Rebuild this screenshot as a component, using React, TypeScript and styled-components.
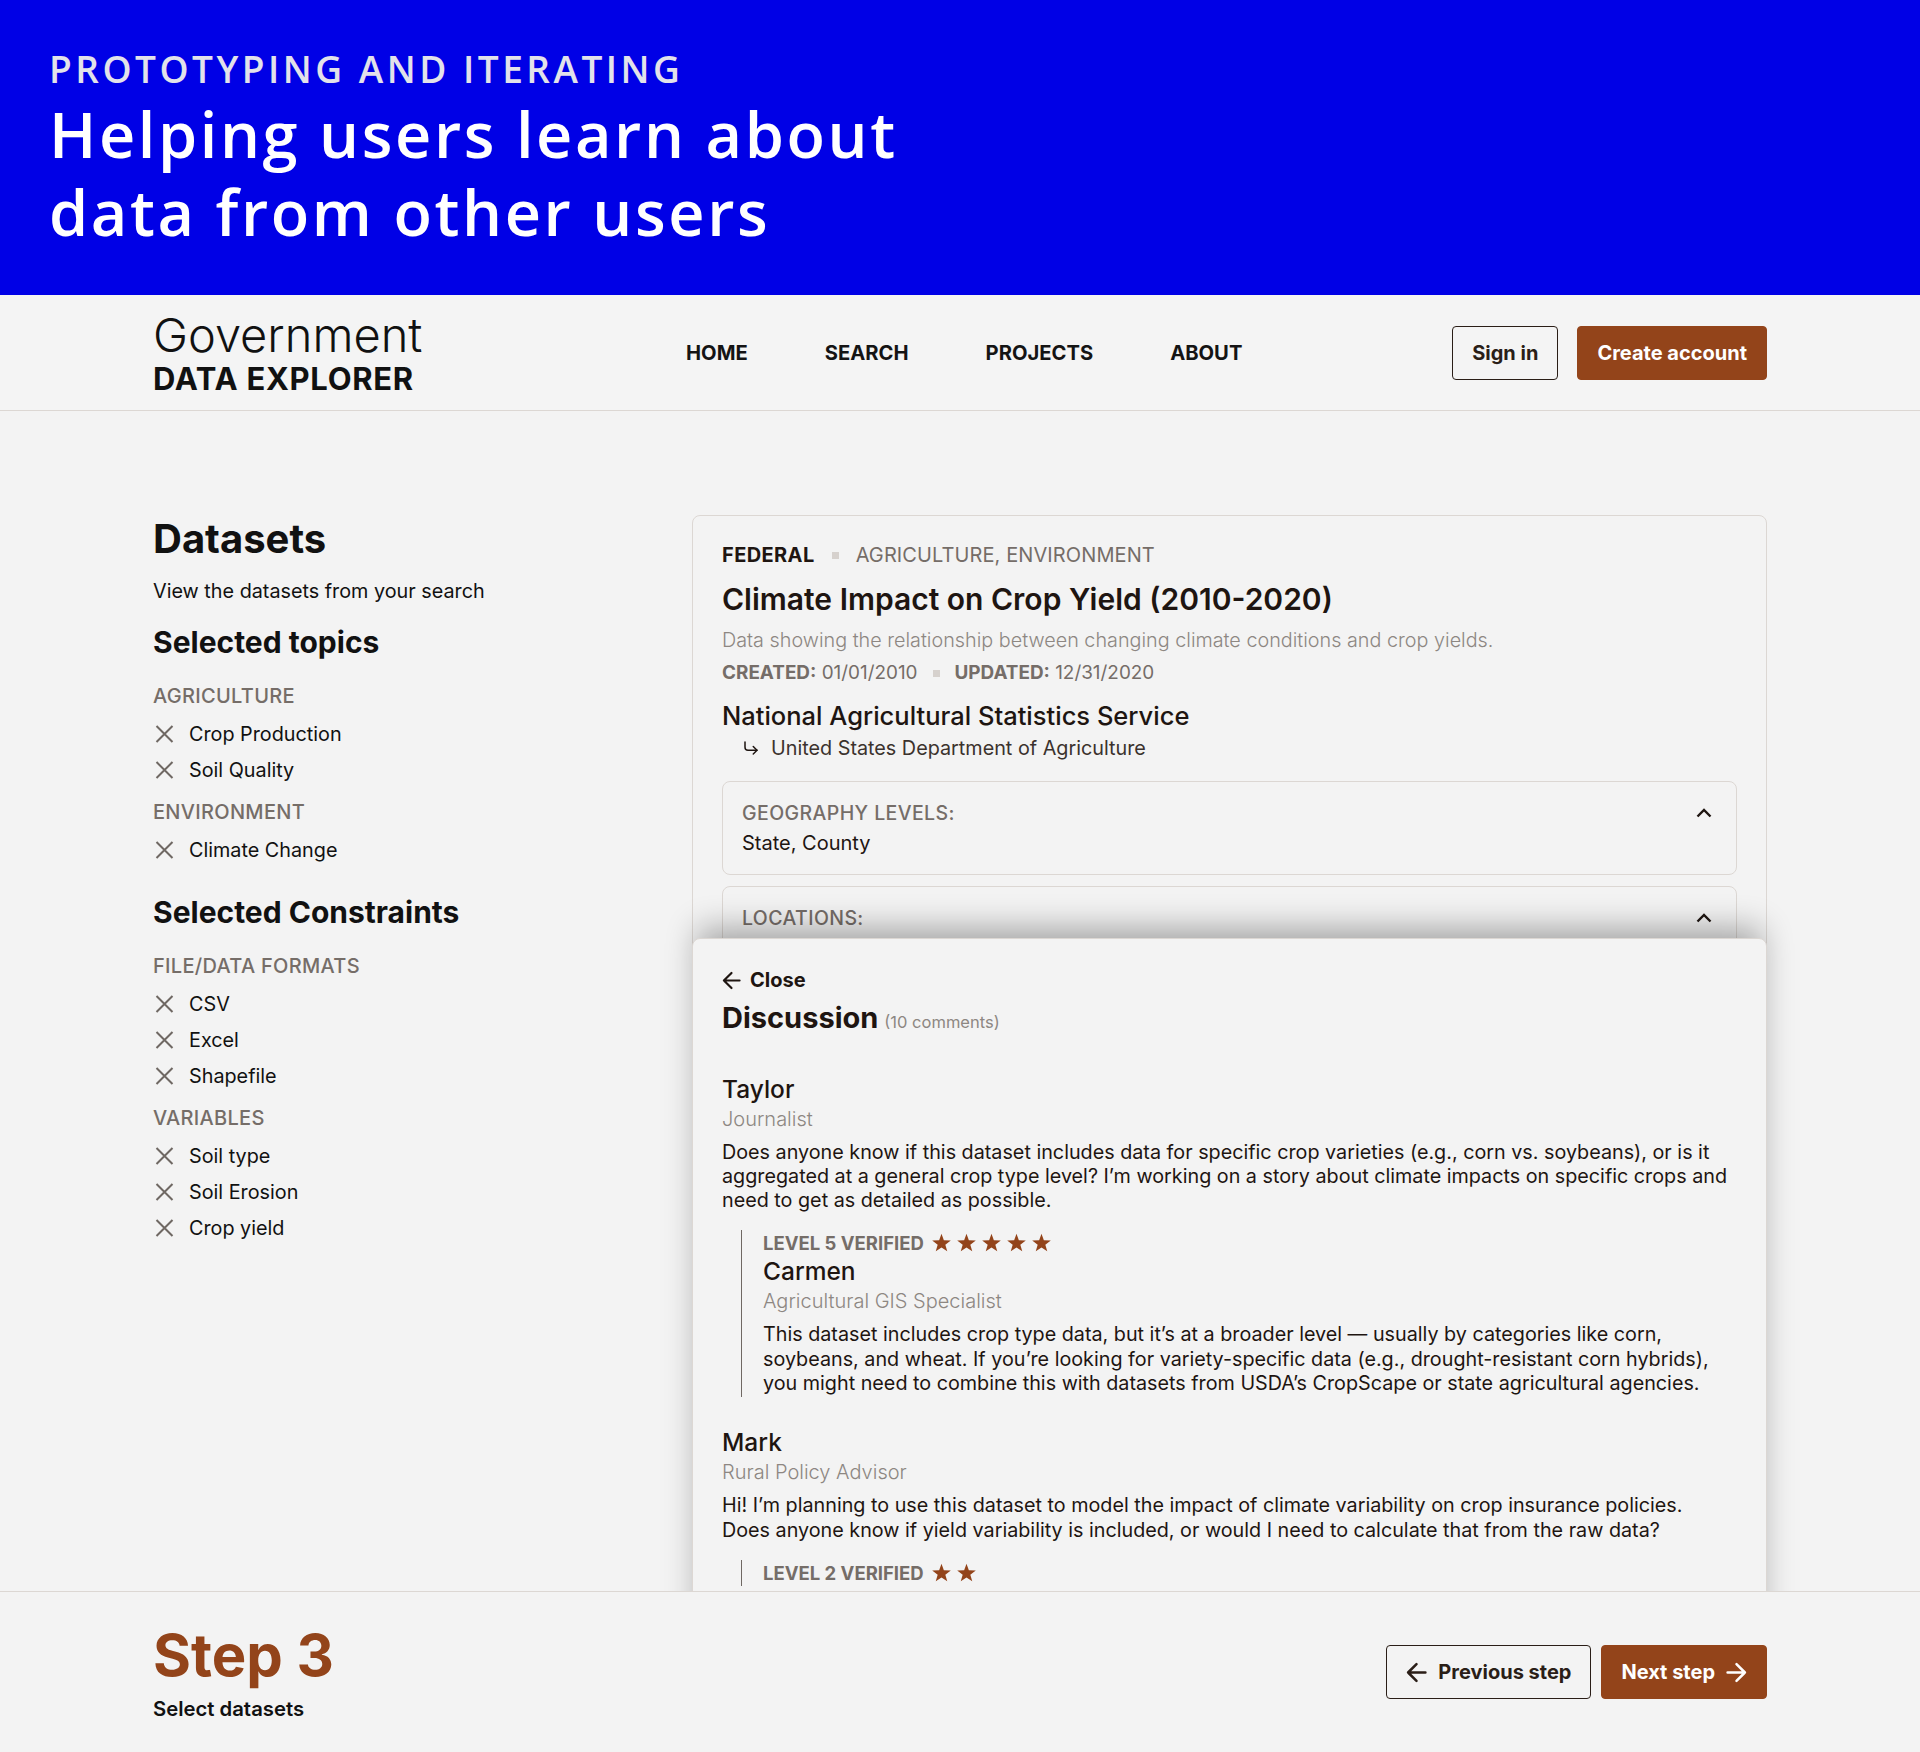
import React from "react";
import styled, { createGlobalStyle } from "styled-components";
import { CornerDownRight } from "lucide-react";

const BROWN = "#93441a";
const INK = "#1e1511";
const GRAY = "#756d68";
const LIGHT = "#8d8782";
const LINE = "#dcd7d3";

const GlobalStyle = createGlobalStyle`
  html, body { margin: 0; padding: 0; background: #f3f3f3; }
  body {
    font-family: Inter, "Noto Sans", sans-serif;
    color: ${INK};
    -webkit-font-smoothing: antialiased;
  }
  * { box-sizing: border-box; }
  h1, h2, h3, p { margin: 0; }
`;

/* ---------- Banner ---------- */
const Banner = styled.section`
  background: #0000e6;
  height: 295px;
  padding: 48px 49px 0;
`;
const Eyebrow = styled.div`
  font-family: "Open Sans", sans-serif;
  font-weight: 600;
  font-size: 37px;
  line-height: 42px;
  letter-spacing: 3.5px;
  color: #e2e2ea;
`;
const BannerTitle = styled.h1`
  margin-top: 5px;
  font-family: "Open Sans", sans-serif;
  font-weight: 600;
  font-size: 63px;
  line-height: 78px;
  letter-spacing: 2.6px;
  color: #fff;
`;

/* ---------- Header ---------- */
const Header = styled.header`
  background: #f4f4f4;
  border-bottom: 1px solid ${LINE};
  height: 116px;
`;
const Container = styled.div`
  width: 1614px;
  margin: 0 auto;
`;
const HeaderInner = styled(Container)`
  height: 100%;
  display: grid;
  grid-template-columns: 533px 1fr auto;
  align-items: center;
`;
const Logo = styled.div`
  display: flex;
  flex-direction: column;
`;
const LogoTop = styled.span`
  font-size: 47px;
  line-height: 48px;
  font-weight: 300;
  color: #111;
`;
const LogoBottom = styled.span`
  margin-top: 4px;
  font-size: 31px;
  line-height: 32px;
  font-weight: 700;
  letter-spacing: 0.7px;
  color: #111;
`;
const Nav = styled.nav`
  display: flex;
  gap: 77px;
`;
const NavLink = styled.a`
  font-size: 20.2px;
  font-weight: 700;
  color: #141414;
  text-decoration: none;
`;
const Actions = styled.div`
  display: flex;
  gap: 19px;
`;
const Button = styled.button<{ $primary?: boolean }>`
  height: 54px;
  padding: 0 19px;
  border-radius: 4px;
  font-family: inherit;
  font-size: 20px;
  font-weight: 700;
  display: inline-flex;
  align-items: center;
  gap: 11px;
  cursor: pointer;
  border: 1px solid ${(p) => (p.$primary ? BROWN : "#2a1e17")};
  background: ${(p) => (p.$primary ? BROWN : "transparent")};
  color: ${(p) => (p.$primary ? "#fff" : "#2a1e17")};
`;

const Arrow = ({ dir, size = 21, width = 2.4 }: { dir: "left" | "right"; size?: number; width?: number }) => (
  <svg
    width={size}
    height={size}
    viewBox="0 0 20 20"
    fill="none"
    stroke="currentColor"
    strokeWidth={width}
    strokeLinecap="round"
    strokeLinejoin="round"
    style={{ transform: dir === "right" ? "scaleX(-1)" : undefined }}
  >
    <path d="M18.5 10 H2 M10 2 L2 10 L10 18" />
  </svg>
);

/* ---------- Main ---------- */
const Main = styled.main`
  height: 1180px;
  overflow: hidden;
`;
const MainInner = styled(Container)`
  padding-top: 104px;
  display: grid;
  grid-template-columns: 539px 1075px;
  align-items: start;
`;

const Sidebar = styled.aside`
  display: flex;
  flex-direction: column;
`;
const PageTitle = styled.h1`
  font-size: 40px;
  line-height: 48px;
  font-weight: 700;
  color: #111;
`;
const PageSub = styled.p`
  margin-top: 14px;
  font-size: 19.8px;
  line-height: 28px;
  color: #111;
`;
const Section = styled.section<{ $gap: number }>`
  margin-top: ${(p) => p.$gap}px;
`;
const SectionTitle = styled.h2`
  font-size: 30px;
  line-height: 36px;
  font-weight: 700;
  color: #111;
`;
const Group = styled.div`
  margin-top: 22px;
  & + & {
    margin-top: 10px;
  }
`;
const GroupLabel = styled.div`
  font-size: 20px;
  line-height: 28px;
  font-weight: 500;
  color: ${GRAY};
  letter-spacing: 0.3px;
`;
const Chips = styled.ul`
  list-style: none;
  margin: 6px 0 0;
  padding: 0;
`;
const Chip = styled.li`
  display: flex;
  align-items: center;
  gap: 15px;
  height: 36px;
  padding-left: 2px;
  font-size: 19.8px;
  color: #111;
`;

const XIcon = () => (
  <svg width="19" height="18" viewBox="0 0 19 18" fill="none">
    <path d="M1.5 1 L17.5 17 M17.5 1 L1.5 17" stroke="#6f6863" strokeWidth="2" />
  </svg>
);

/* ---------- Card ---------- */
const CardColumn = styled.div`
  position: relative;
`;
const Card = styled.article`
  min-height: 1300px;
  border: 1px solid ${LINE};
  border-radius: 8px;
  padding: 27px 29px 0;
`;
const MetaRow = styled.div`
  display: flex;
  align-items: center;
  gap: 17px;
  font-size: 20px;
  line-height: 24px;
`;
const Strong = styled.span`
  font-weight: 700;
  color: ${INK};
  letter-spacing: 0.4px;
`;
const Muted = styled.span`
  color: ${GRAY};
  letter-spacing: 0.1px;
`;
const Dot = styled.span`
  width: 7px;
  height: 7px;
  background: #d6d1cd;
`;
const CardTitle = styled.h2`
  margin-top: 14px;
  font-size: 30px;
  line-height: 36px;
  font-weight: 600;
  color: ${INK};
`;
const Desc = styled.p`
  margin-top: 10px;
  font-size: 19.8px;
  line-height: 26px;
  color: ${LIGHT};
  font-weight: 300;
`;
const DateRow = styled.div`
  margin-top: 7px;
  display: flex;
  align-items: center;
  gap: 15px;
  font-size: 18.9px;
  line-height: 26px;
  color: ${GRAY};
`;
const DateLabel = styled.b`
  font-weight: 700;
`;
const Org = styled.h3`
  margin-top: 14px;
  font-size: 25.5px;
  line-height: 32px;
  font-weight: 500;
  color: ${INK};
`;
const SubOrg = styled.div`
  margin-top: 3px;
  padding-left: 20px;
  display: flex;
  align-items: center;
  gap: 11px;
  font-size: 19.8px;
  line-height: 26px;
  color: #3b322d;
`;
const Accordion = styled.div`
  margin-top: 20px;
  border: 1px solid ${LINE};
  border-radius: 8px;
  padding: 19px 24px 18px 19px;
  & + & {
    margin-top: 11px;
  }
`;
const AccHead = styled.div`
  display: flex;
  justify-content: space-between;
  align-items: center;
`;
const AccLabel = styled.div`
  font-size: 19.5px;
  line-height: 24px;
  font-weight: 500;
  color: ${GRAY};
  letter-spacing: 0.4px;
`;
const AccValue = styled.div`
  margin-top: 5px;
  font-size: 20px;
  line-height: 26px;
  color: ${INK};
`;
const ChevronUp = () => (
  <svg width="16" height="10" viewBox="0 0 16 10" fill="none">
    <path d="M1.5 8.5 L8 2 L14.5 8.5" stroke="#1e1511" strokeWidth="2.4" />
  </svg>
);

/* ---------- Discussion overlay ---------- */
const Overlay = styled.div`
  position: absolute;
  top: 423px;
  left: 0;
  right: 0;
  bottom: 0;
  background: #f3f3f3;
  border: 1px solid ${LINE};
  border-radius: 8px 8px 0 0;
  box-shadow: 0 -16px 32px -6px rgba(0, 0, 0, 0.32);
  padding: 29px 29px 0;
`;
const CloseLink = styled.a`
  display: inline-flex;
  align-items: center;
  gap: 9px;
  font-size: 20px;
  line-height: 24px;
  font-weight: 700;
  color: ${INK};
`;
const DiscTitle = styled.h2`
  margin-top: 6px;
  display: flex;
  align-items: baseline;
  gap: 6px;
  font-size: 29px;
  line-height: 36px;
  font-weight: 700;
  color: ${INK};
`;
const Count = styled.span`
  font-size: 16.5px;
  font-weight: 400;
  color: ${LIGHT};
`;
const Comment = styled.div`
  margin-top: 34px;
  & + & {
    margin-top: 30px;
  }
`;
const Author = styled.div`
  font-size: 24.5px;
  line-height: 30px;
  font-weight: 500;
  color: ${INK};
`;
const Role = styled.div`
  margin-top: 2px;
  font-size: 20px;
  line-height: 26px;
  font-weight: 300;
  color: ${LIGHT};
`;
const Body = styled.p`
  margin-top: 8px;
  font-size: 19.75px;
  line-height: 24.3px;
  color: ${INK};
`;
const Reply = styled.div`
  margin: 18px 0 0 19px;
  border-left: 1.5px solid #6f6863;
  padding: 2px 0 2px 21px;
  & ${Author} {
    margin-top: 2px;
  }
`;
const Verified = styled.div`
  display: flex;
  align-items: center;
  gap: 7px;
  font-size: 18.5px;
  line-height: 22px;
  font-weight: 700;
  color: ${GRAY};
`;
const Stars = styled.span`
  display: inline-flex;
  gap: 4px;
`;
const Star = () => (
  <svg width="21" height="20" viewBox="0 0 24 23">
    <path
      d="M12 0.8 L14.7 8.3 L22.7 8.5 L16.4 13.4 L18.6 21.1 L12 16.6 L5.4 21.1 L7.6 13.4 L1.3 8.5 L9.3 8.3 Z"
      fill={BROWN}
    />
  </svg>
);

/* ---------- Footer ---------- */
const Footer = styled.footer`
  border-top: 1px solid ${LINE};
  height: 161px;
  background: #f3f3f3;
`;
const FooterInner = styled(Container)`
  height: 100%;
  display: flex;
  align-items: center;
  justify-content: space-between;
`;
const StepBlock = styled.div`
  display: flex;
  flex-direction: column;
`;
const StepTitle = styled.div`
  font-size: 58px;
  line-height: 64px;
  font-weight: 700;
  color: ${BROWN};
`;
const StepSub = styled.div`
  margin-top: 10px;
  font-size: 20.3px;
  line-height: 24px;
  font-weight: 600;
  color: #111;
`;
const StepButtons = styled.div`
  display: flex;
  gap: 10px;
`;

const topics = [
  { label: "AGRICULTURE", items: ["Crop Production", "Soil Quality"] },
  { label: "ENVIRONMENT", items: ["Climate Change"] },
];
const constraints = [
  { label: "FILE/DATA FORMATS", items: ["CSV", "Excel", "Shapefile"] },
  { label: "VARIABLES", items: ["Soil type", "Soil Erosion", "Crop yield"] },
];

type GroupData = { label: string; items: string[] };
const Groups = ({ groups }: { groups: GroupData[] }) => (
  <>
    {groups.map((g) => (
      <Group key={g.label}>
        <GroupLabel>{g.label}</GroupLabel>
        <Chips>
          {g.items.map((i) => (
            <Chip key={i}>
              <XIcon />
              {i}
            </Chip>
          ))}
        </Chips>
      </Group>
    ))}
  </>
);

const StarRow = ({ n }: { n: number }) => (
  <Stars>
    {Array.from({ length: n }).map((_, i) => (
      <Star key={i} />
    ))}
  </Stars>
);

const Lines = ({ lines }: { lines: string[] }) => (
  <Body>
    {lines.map((l, i) => (
      <React.Fragment key={i}>
        {i > 0 && <br />}
        {l}
      </React.Fragment>
    ))}
  </Body>
);

export default function App() {
  return (
    <>
      <GlobalStyle />
      <Banner>
        <Eyebrow>PROTOTYPING AND ITERATING</Eyebrow>
        <BannerTitle>
          Helping users learn about
          <br />
          data from other users
        </BannerTitle>
      </Banner>

      <Header>
        <HeaderInner>
          <Logo>
            <LogoTop>Government</LogoTop>
            <LogoBottom>DATA EXPLORER</LogoBottom>
          </Logo>
          <Nav>
            <NavLink>HOME</NavLink>
            <NavLink>SEARCH</NavLink>
            <NavLink>PROJECTS</NavLink>
            <NavLink>ABOUT</NavLink>
          </Nav>
          <Actions>
            <Button>Sign in</Button>
            <Button $primary>Create account</Button>
          </Actions>
        </HeaderInner>
      </Header>

      <Main>
        <MainInner>
          <Sidebar>
            <PageTitle>Datasets</PageTitle>
            <PageSub>View the datasets from your search</PageSub>
            <Section $gap={19}>
              <SectionTitle>Selected topics</SectionTitle>
              <Groups groups={topics} />
            </Section>
            <Section $gap={26}>
              <SectionTitle>Selected Constraints</SectionTitle>
              <Groups groups={constraints} />
            </Section>
          </Sidebar>

          <CardColumn>
            <Card>
              <MetaRow>
                <Strong>FEDERAL</Strong>
                <Dot />
                <Muted>AGRICULTURE, ENVIRONMENT</Muted>
              </MetaRow>
              <CardTitle>Climate Impact on Crop Yield (2010-2020)</CardTitle>
              <Desc>
                Data showing the relationship between changing climate conditions and crop yields.
              </Desc>
              <DateRow>
                <span>
                  <DateLabel>CREATED:</DateLabel> 01/01/2010
                </span>
                <Dot />
                <span>
                  <DateLabel>UPDATED:</DateLabel> 12/31/2020
                </span>
              </DateRow>
              <Org>National Agricultural Statistics Service</Org>
              <SubOrg>
                <CornerDownRight size={18} strokeWidth={2} color={INK} />
                United States Department of Agriculture
              </SubOrg>
              <Accordion>
                <AccHead>
                  <AccLabel>GEOGRAPHY LEVELS:</AccLabel>
                  <ChevronUp />
                </AccHead>
                <AccValue>State, County</AccValue>
              </Accordion>
              <Accordion>
                <AccHead>
                  <AccLabel>LOCATIONS:</AccLabel>
                  <ChevronUp />
                </AccHead>
                <AccValue>Iowa, Illinois, Nebraska, Minnesota</AccValue>
              </Accordion>
            </Card>

            <Overlay>
              <CloseLink>
                <Arrow dir="left" size={19} width={2.3} />
                Close
              </CloseLink>
              <DiscTitle>
                Discussion <Count>(10 comments)</Count>
              </DiscTitle>

              <Comment>
                <Author>Taylor</Author>
                <Role>Journalist</Role>
                <Lines
                  lines={[
                    "Does anyone know if this dataset includes data for specific crop varieties (e.g., corn vs. soybeans), or is it",
                    "aggregated at a general crop type level? I’m working on a story about climate impacts on specific crops and",
                    "need to get as detailed as possible.",
                  ]}
                />
                <Reply>
                  <Verified>
                    LEVEL 5 VERIFIED <StarRow n={5} />
                  </Verified>
                  <Author>Carmen</Author>
                  <Role>Agricultural GIS Specialist</Role>
                  <Lines
                    lines={[
                      "This dataset includes crop type data, but it’s at a broader level — usually by categories like corn,",
                      "soybeans, and wheat. If you’re looking for variety-specific data (e.g., drought-resistant corn hybrids),",
                      "you might need to combine this with datasets from USDA’s CropScape or state agricultural agencies.",
                    ]}
                  />
                </Reply>
              </Comment>

              <Comment>
                <Author>Mark</Author>
                <Role>Rural Policy Advisor</Role>
                <Lines
                  lines={[
                    "Hi! I’m planning to use this dataset to model the impact of climate variability on crop insurance policies.",
                    "Does anyone know if yield variability is included, or would I need to calculate that from the raw data?",
                  ]}
                />
                <Reply>
                  <Verified>
                    LEVEL 2 VERIFIED <StarRow n={2} />
                  </Verified>
                </Reply>
              </Comment>
            </Overlay>
          </CardColumn>
        </MainInner>
      </Main>

      <Footer>
        <FooterInner>
          <StepBlock>
            <StepTitle>Step 3</StepTitle>
            <StepSub>Select datasets</StepSub>
          </StepBlock>
          <StepButtons>
            <Button>
              <Arrow dir="left" />
              Previous step
            </Button>
            <Button $primary>
              Next step
              <Arrow dir="right" />
            </Button>
          </StepButtons>
        </FooterInner>
      </Footer>
    </>
  );
}
